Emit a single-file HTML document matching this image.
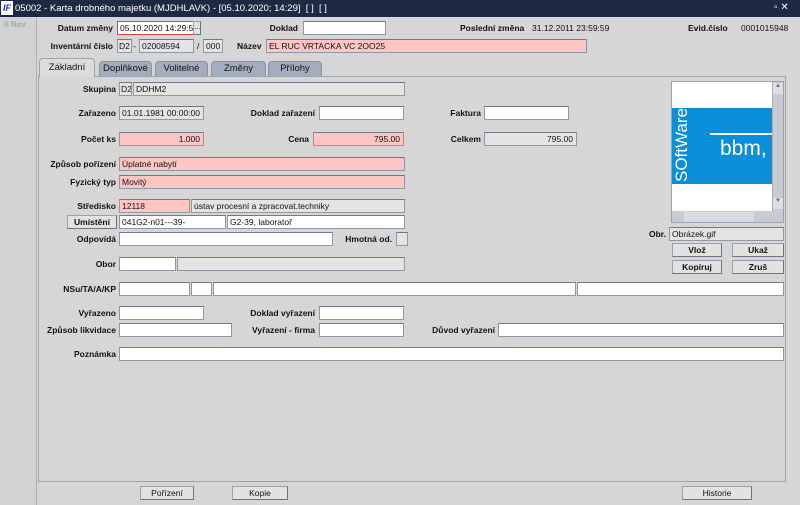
<!DOCTYPE html>
<html><head><meta charset="utf-8"><style>
*{box-sizing:border-box;margin:0;padding:0}
body{width:800px;height:505px;overflow:hidden;background:#d6d6d6;font-family:"Liberation Sans",sans-serif;font-size:8.5px;color:#111;position:relative}
.a{position:absolute}
.l{position:absolute;font-weight:bold;text-align:right;white-space:nowrap;line-height:14px;font-size:8.5px}
.i{position:absolute;height:14px;background:#fff;border:1px solid #8e99a6;border-top-color:#6f7a88;line-height:12px;padding-left:2px;white-space:nowrap;overflow:hidden;font-size:8.5px}
.p{background:#ffc4c4}
.g{background:#e4e4e4}
.r{text-align:right;padding-right:3px}
.b{position:absolute;height:14px;background:#e2e2e2;border:1px solid #9aa0a8;border-right-color:#6f757c;border-bottom-color:#6f757c;text-align:center;line-height:12px;font-size:8.5px}
.t{position:absolute;top:61px;height:15px;background:#a2aebd;border:1px solid #8793a3;border-bottom:none;border-radius:4px 4px 0 0;text-align:center;line-height:14px;font-size:9.5px}
</style></head><body>
<div class="a" style="left:0;top:0;width:800px;height:17px;background:#1e2a44"></div>
<div class="a" style="left:1px;top:1px;width:12px;height:14px;background:#fff;color:#1a3aa8;font-weight:bold;font-style:italic;font-size:9px;line-height:14px;text-align:center">IF</div>
<div class="a" style="left:15px;top:2px;color:#fff;font-size:9.5px;line-height:13px;white-space:nowrap">05002 - Karta drobného majetku (MJDHLAVK) - [05.10.2020; 14:29]&nbsp; [ ]&nbsp; [ ]</div>
<div class="a" style="left:774px;top:2px;color:#fff;font-size:10px">▫ ✕</div>
<div class="a" style="left:0;top:17px;width:37px;height:488px;background:#d2d2d2;border-right:1px solid #b0b0b0"></div>
<div class="a" style="left:3px;top:21px;width:6px;height:6px;border-radius:50%;background:#bbb"></div>
<div class="a" style="left:11px;top:20px;color:#9aa;font-size:8px;font-weight:bold">Nav</div>

<div class="l" style="right:687px;top:21px">Datum změny</div>
<div class="i" style="left:117px;top:21px;width:77px;border:1px solid #e04040">05.10.2020 14:29:59</div>
<div class="b" style="left:193px;top:21px;width:8px;line-height:9px">...</div>
<div class="l" style="right:502px;top:21px">Doklad</div>
<div class="i" style="left:303px;top:21px;width:83px"></div>
<div class="l" style="left:460px;top:21px">Poslední změna</div>
<div class="a" style="left:532px;top:21px;line-height:14px">31.12.2011 23:59:59</div>
<div class="l" style="left:688px;top:21px">Evid.číslo</div>
<div class="a" style="left:741px;top:21px;line-height:14px">0001015948</div>

<div class="l" style="right:687px;top:39px">Inventární číslo</div>
<div class="i g" style="left:117px;top:39px;width:15px;padding-left:1px">D2</div>
<div class="a" style="left:133px;top:39px;line-height:14px">-</div>
<div class="i g" style="left:139px;top:39px;width:55px">02008594</div>
<div class="a" style="left:197px;top:39px;line-height:14px">/</div>
<div class="i g" style="left:203px;top:39px;width:20px">000</div>
<div class="l" style="left:237px;top:39px">Název</div>
<div class="i p" style="left:266px;top:39px;width:321px">EL RUC VRTACKA VC 2OO25</div>

<div class="a" style="left:38px;top:76px;width:748px;height:406px;border:1px solid #9aa3ae;background:#d6d6d6"></div>
<div class="t" style="left:39px;top:58px;height:19px;width:56px;background:#dcdcdc;line-height:18px;border-color:#9aa3ae">Základní</div>
<div class="t" style="left:99px;width:53px">Doplňkové</div>
<div class="t" style="left:155px;width:53px">Volitelné</div>
<div class="t" style="left:211px;width:55px">Změny</div>
<div class="t" style="left:268px;width:54px">Přílohy</div>

<div class="l" style="right:684px;top:82px">Skupina</div>
<div class="i g" style="left:119px;top:82px;width:13px;padding-left:1px">D2</div>
<div class="i g" style="left:133px;top:82px;width:272px">DDHM2</div>

<div class="l" style="right:684px;top:106px">Zařazeno</div>
<div class="i g" style="left:119px;top:106px;width:85px">01.01.1981 00:00:00</div>
<div class="l" style="right:485px;top:106px">Doklad zařazení</div>
<div class="i" style="left:319px;top:106px;width:85px"></div>
<div class="l" style="right:319px;top:106px">Faktura</div>
<div class="i" style="left:484px;top:106px;width:85px"></div>

<div class="l" style="right:684px;top:132px">Počet ks</div>
<div class="i p r" style="left:119px;top:132px;width:85px">1.000</div>
<div class="l" style="right:491px;top:132px">Cena</div>
<div class="i p r" style="left:313px;top:132px;width:91px">795.00</div>
<div class="l" style="right:319px;top:132px">Celkem</div>
<div class="i g r" style="left:484px;top:132px;width:93px">795.00</div>

<div class="l" style="right:684px;top:157px">Způsob pořízení</div>
<div class="i p" style="left:119px;top:157px;width:286px">Úplatné nabytí</div>
<div class="l" style="right:684px;top:175px">Fyzický typ</div>
<div class="i p" style="left:119px;top:175px;width:286px">Movitý</div>

<div class="l" style="right:684px;top:199px">Středisko</div>
<div class="i p" style="left:119px;top:199px;width:71px">12118</div>
<div class="i g" style="left:191px;top:199px;width:214px">ústav procesní a zpracovat.techniky</div>
<div class="b" style="left:67px;top:215px;width:50px;font-weight:bold">Umístění</div>
<div class="i" style="left:119px;top:215px;width:107px">041G2-n01---39-</div>
<div class="i" style="left:227px;top:215px;width:178px">G2-39, laboratoř</div>
<div class="l" style="right:684px;top:232px">Odpovídá</div>
<div class="i" style="left:119px;top:232px;width:214px"></div>
<div class="l" style="right:408px;top:232px">Hmotná od.</div>
<div class="i g" style="left:396px;top:232px;width:12px"></div>

<div class="l" style="right:684px;top:257px">Obor</div>
<div class="i" style="left:119px;top:257px;width:57px"></div>
<div class="i g" style="left:177px;top:257px;width:228px"></div>

<div class="l" style="right:684px;top:282px">NSu/TA/A/KP</div>
<div class="i" style="left:119px;top:282px;width:71px"></div>
<div class="i" style="left:191px;top:282px;width:21px"></div>
<div class="i" style="left:213px;top:282px;width:363px"></div>
<div class="i" style="left:577px;top:282px;width:207px"></div>

<div class="l" style="right:684px;top:306px">Vyřazeno</div>
<div class="i" style="left:119px;top:306px;width:85px"></div>
<div class="l" style="right:485px;top:306px">Doklad vyřazení</div>
<div class="i" style="left:319px;top:306px;width:85px"></div>
<div class="l" style="right:684px;top:323px">Způsob likvidace</div>
<div class="i" style="left:119px;top:323px;width:113px"></div>
<div class="l" style="right:485px;top:323px">Vyřazení - firma</div>
<div class="i" style="left:319px;top:323px;width:85px"></div>
<div class="l" style="right:305px;top:323px">Důvod vyřazení</div>
<div class="i" style="left:498px;top:323px;width:286px"></div>
<div class="l" style="right:684px;top:347px">Poznámka</div>
<div class="i" style="left:119px;top:347px;width:665px"></div>

<div class="a" style="left:671px;top:81px;width:113px;height:142px;background:#fff;border:1px solid #9aa3ae;overflow:hidden">
 <div class="a" style="left:0;top:26px;width:100px;height:76px;background:#0a8fd8"></div>
 <div class="a" style="left:38px;top:51px;width:62px;height:2px;background:#fff"></div>
 <div class="a" style="left:48px;top:55px;color:#fff;font-size:21px;line-height:24px">bbm,</div>
 <div class="a" style="left:-28px;top:53px;width:76px;color:#fff;font-size:17px;line-height:20px;transform:rotate(-90deg);text-align:center;white-space:nowrap">SOftWare</div>
 <div class="a" style="left:100px;top:0;width:12px;height:129px;background:#c8ccd2;border-left:1px solid #aab"></div>
 <div class="a" style="left:101px;top:1px;width:10px;height:11px;background:#dde0e4;font-size:6px;text-align:center;color:#667">▲</div>
 <div class="a" style="left:101px;top:116px;width:10px;height:11px;background:#dde0e4;font-size:6px;text-align:center;color:#667">▼</div>
 <div class="a" style="left:0;top:129px;width:112px;height:12px;background:#c8ccd2"></div>
 <div class="a" style="left:12px;top:130px;width:70px;height:10px;background:#d8dbe0"></div>
</div>
<div class="l" style="right:134px;top:227px">Obr.</div>
<div class="i g" style="left:669px;top:227px;width:115px">Obrázek.gif</div>
<div class="b" style="left:672px;top:243px;width:50px;font-weight:bold">Vlož</div>
<div class="b" style="left:732px;top:243px;width:52px;font-weight:bold">Ukaž</div>
<div class="b" style="left:672px;top:260px;width:50px;font-weight:bold">Kopíruj</div>
<div class="b" style="left:732px;top:260px;width:52px;font-weight:bold">Zruš</div>

<div class="b" style="left:140px;top:486px;width:54px">Pořízení</div>
<div class="b" style="left:232px;top:486px;width:56px">Kopie</div>
<div class="b" style="left:682px;top:486px;width:70px">Historie</div>
</body></html>
